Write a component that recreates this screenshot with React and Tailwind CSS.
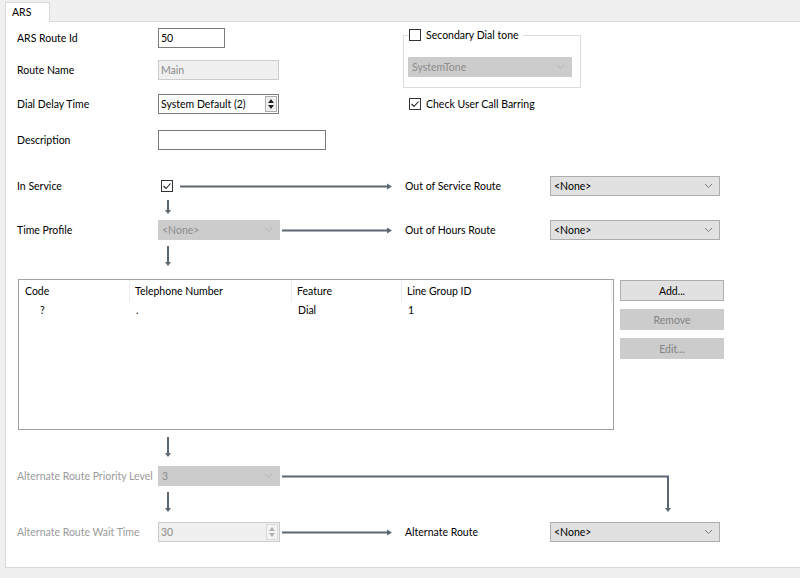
import React from "react";

const LINE = "#5b6773";

function Chevron({ color = "#8a8a8a" }) {
  return (
    <svg width="9" height="6" viewBox="0 0 9 6">
      <path d="M1 1 L4.5 4.5 L8 1" fill="none" stroke={color} strokeWidth="1" />
    </svg>
  );
}

function Check({ checked }) {
  return (
    <div className="w-[12px] h-[12px] border border-[#333] bg-white flex items-center justify-center shrink-0">
      {checked && (
        <svg width="10" height="10" viewBox="0 0 10 10">
          <path d="M1.5 5 L4 7.5 L8.5 2.5" fill="none" stroke="#222" strokeWidth="1.1" />
        </svg>
      )}
    </div>
  );
}

function HArrow({ w, x1, tip }) {
  return (
    <svg width={w} height="20" viewBox={`0 0 ${w} 20`} className="shrink-0">
      <line x1={x1} y1="10.5" x2={tip - 3} y2="10.5" stroke={LINE} strokeWidth="2" />
      <polygon points={`${tip - 5},7.5 ${tip},10.5 ${tip - 5},13.5`} fill={LINE} />
    </svg>
  );
}

function VArrow({ h, y1, tip }) {
  return (
    <svg width="21" height={h} viewBox={`0 0 21 ${h}`} className="shrink-0">
      <line x1="10" y1={y1} x2="10" y2={tip - 3} stroke={LINE} strokeWidth="2" />
      <polygon points={`7,${tip - 4} 13,${tip - 4} 10,${tip}`} fill={LINE} />
    </svg>
  );
}

function Spinner({ disabled }) {
  const c = disabled ? "#b0b0b0" : "#222";
  return (
    <div
      className={
        "w-[12px] h-[16px] flex flex-col items-center justify-center gap-[2px] border " +
        (disabled ? "border-[#d8d8d8] bg-[#f4f4f4]" : "border-[#adadad] bg-[#f0f0f0]")
      }
    >
      <svg width="6" height="4" viewBox="0 0 6 4">
        <polygon points="0,4 6,4 3,0" fill={c} />
      </svg>
      <svg width="6" height="4" viewBox="0 0 6 4">
        <polygon points="0,0 6,0 3,4" fill={c} />
      </svg>
    </div>
  );
}

function Combo({ value, disabled, className }) {
  return (
    <div
      className={
        "h-[20px] flex items-center justify-between pl-[3px] pr-[6px] border " +
        (disabled
          ? "bg-[#cccccc] border-[#cccccc] text-[#8c8c8c] "
          : "bg-[#e1e1e1] border-[#adadad] text-black ") +
        className
      }
    >
      <span>{value}</span>
      <Chevron color={disabled ? "#b4b4b4" : "#7a7a7a"} />
    </div>
  );
}

function Label({ children, gray }) {
  return (
    <div className={"w-[141px] shrink-0 whitespace-nowrap " + (gray ? "text-[#9a9a9a]" : "text-black")}>{children}</div>
  );
}

function Button({ children, disabled }) {
  return (
    <div
      className={
        "w-[104px] h-[21px] flex items-center justify-center border " +
        (disabled ? "bg-[#cccccc] border-[#cccccc] text-[#838383]" : "bg-[#e1e1e1] border-[#adadad] text-black")
      }
    >
      {children}
    </div>
  );
}

export default function App() {
  return (
    <div className="w-[800px] h-[578px] bg-[#f0f0f0] overflow-hidden font-['Lato','Liberation_Sans',sans-serif] text-[10.5px] leading-[14px] text-black whitespace-nowrap">
      <div className="h-[21px] flex items-end pl-[5px]">
        <div className="relative z-10 -mb-px w-[45px] h-[20px] bg-white border border-b-0 border-[#d9d9d9] pl-[6px] pt-[2px]">
          ARS
        </div>
      </div>
      <div className="ml-[5px] h-[547px] bg-white border border-r-0 border-[#d9d9d9] pl-[11px]">
        {/* top section */}
        <div className="flex">
          <div className="w-[386px] shrink-0 flex flex-col">
            <div className="mt-[6px] h-[20px] flex items-center">
              <Label>ARS Route Id</Label>
              <div className="w-[67px] h-[20px] border border-[#7a7a7a] bg-white flex items-center pl-[2px]">50</div>
            </div>
            <div className="mt-[12px] h-[20px] flex items-center">
              <Label>Route Name</Label>
              <div className="w-[121px] h-[20px] border border-[#cccccc] bg-[#f0f0f0] text-[#8a8a8a] flex items-center pl-[2px]">
                Main
              </div>
            </div>
            <div className="mt-[14px] h-[20px] flex items-center">
              <Label>Dial Delay Time</Label>
              <div className="w-[121px] h-[20px] border border-[#7a7a7a] bg-white flex items-center justify-between pl-[2px] pr-[1px]">
                <span>System Default (2)</span>
                <Spinner />
              </div>
            </div>
            <div className="mt-[16px] h-[20px] flex items-center">
              <Label>Description</Label>
              <div className="w-[168px] h-[20px] border border-[#7a7a7a] bg-white"></div>
            </div>
          </div>
          <div className="flex flex-col">
            <fieldset className="mt-[6px] w-[178px] border border-[#dcdcdc] px-[4px] pb-[10px]">
              <legend className="flex items-center gap-[5px] pr-[4px] ml-[1px] h-[14px]">
                <Check />
                <span>Secondary Dial tone</span>
              </legend>
              <Combo value="SystemTone" disabled className="mt-[15px] w-[164px]" />
            </fieldset>
            <div className="mt-[9px] ml-[6px] flex items-center gap-[5px] h-[14px]">
              <Check checked />
              <span>Check User Call Barring</span>
            </div>
          </div>
        </div>

        {/* In Service */}
        <div className="mt-[26px] h-[20px] flex items-center">
          <Label>In Service</Label>
          <div className="w-[22px] shrink-0 pl-[3px]">
            <Check checked />
          </div>
          <HArrow w={225} x1={0} tip={212} />
          <div className="w-[145px] shrink-0">Out of Service Route</div>
          <Combo value="<None>" className="w-[170px]" />
        </div>
        <div className="h-[24px] pl-[141px]">
          <VArrow h={24} y1={4} tip={18} />
        </div>
        {/* Time Profile */}
        <div className="h-[20px] flex items-center">
          <Label>Time Profile</Label>
          <Combo value="<None>" disabled className="w-[122px] shrink-0" />
          <HArrow w={125} x1={2} tip={112} />
          <div className="w-[145px] shrink-0">Out of Hours Route</div>
          <Combo value="<None>" className="w-[170px]" />
        </div>
        <div className="h-[39px] pl-[141px]">
          <VArrow h={39} y1={6} tip={26} />
        </div>

        {/* table + buttons */}
        <div className="flex items-start gap-[6px] pl-[1px]">
          <div className="w-[596px] h-[151px] border border-[#a0a0a0] bg-white">
            <div className="flex h-[22px] items-center">
              <div className="w-[111px] h-full flex items-center pl-[6px] border-r border-[#ececec]">Code</div>
              <div className="w-[162px] h-full flex items-center pl-[5px] border-r border-[#ececec]">Telephone Number</div>
              <div className="w-[110px] h-full flex items-center pl-[5px] border-r border-[#ececec]">Feature</div>
              <div className="w-[210px] h-full flex items-center pl-[5px] border-r border-[#ececec]">Line Group ID</div>
            </div>
            <div className="flex h-[16px] items-center">
              <div className="w-[111px] pl-[21px]">?</div>
              <div className="w-[162px] pl-[6px]">.</div>
              <div className="w-[110px] pl-[6px]">Dial</div>
              <div className="w-[210px] pl-[6px]">1</div>
            </div>
          </div>
          <div className="flex flex-col gap-[8px] mt-[1px]">
            <Button>Add...</Button>
            <Button disabled>Remove</Button>
            <Button disabled>Edit...</Button>
          </div>
        </div>
        <div className="h-[36px] pl-[141px]">
          <VArrow h={36} y1={7} tip={27} />
        </div>

        {/* Priority */}
        <div className="h-[20px] flex items-center">
          <Label gray>Alternate Route Priority Level</Label>
          <Combo value="3" disabled className="w-[122px] shrink-0" />
          <svg width="392" height="20" viewBox="0 0 392 20" className="shrink-0 overflow-visible">
            <path d="M2 10.5 L388 10.5 L388 43" fill="none" stroke={LINE} strokeWidth="2" />
            <polygon points="385,42 391,42 388,46" fill={LINE} />
          </svg>
        </div>
        <div className="h-[36px] pl-[141px]">
          <VArrow h={36} y1={6} tip={26} />
        </div>

        {/* Wait time */}
        <div className="h-[20px] flex items-center">
          <Label gray>Alternate Route Wait Time</Label>
          <div className="w-[122px] shrink-0 h-[20px] border border-[#cccccc] bg-[#f0f0f0] text-[#8c8c8c] flex items-center justify-between pl-[2px] pr-[1px]">
            <span>30</span>
            <Spinner disabled />
          </div>
          <HArrow w={125} x1={2} tip={112} />
          <div className="w-[145px] shrink-0">Alternate Route</div>
          <Combo value="<None>" className="w-[170px]" />
        </div>
      </div>
    </div>
  );
}
